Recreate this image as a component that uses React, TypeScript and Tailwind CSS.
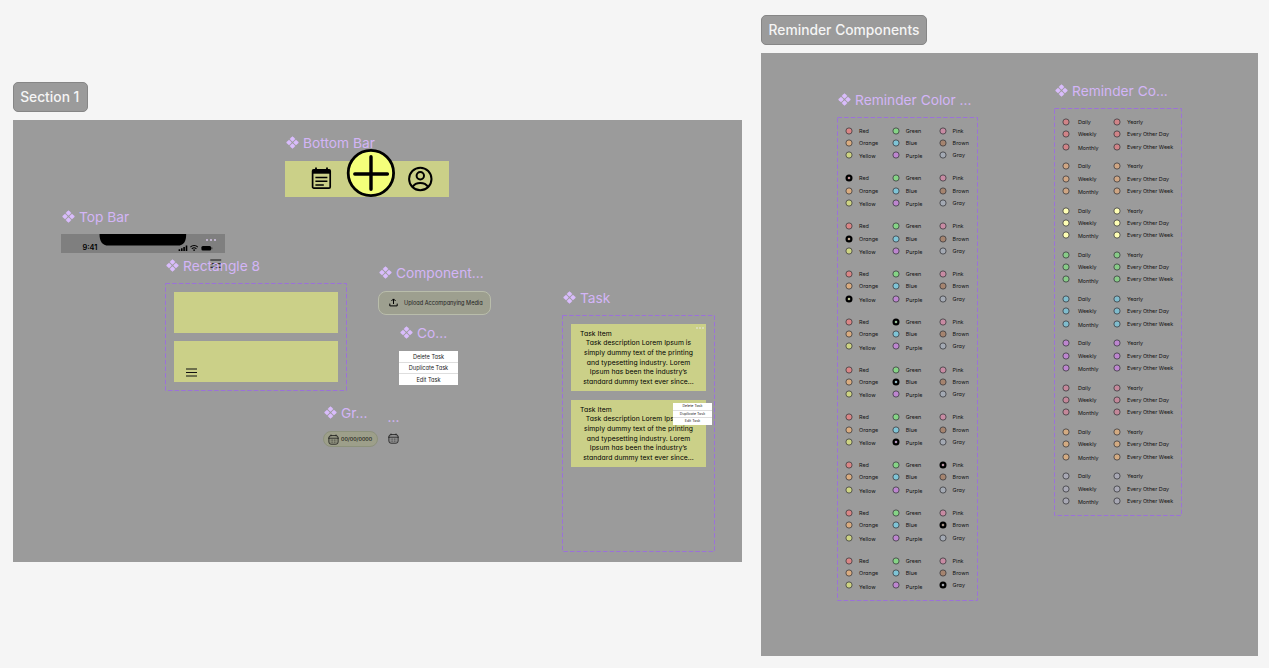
import type { ReactNode } from "react";

const INTER = "font-[Inter,sans-serif]";
const BODY = "font-[Inter,sans-serif] [font-feature-settings:'cv11']";

function Heading({ children, icon = true }: { children: string; icon?: boolean }) {
  return (
    <div className={`flex h-5 items-center gap-[4.5px] whitespace-nowrap pl-[0.5px] pt-[3px] ${INTER} text-[13.75px] text-[#d3b5f7]`}>
      {icon && (
        <svg viewBox="0 0 13 13" className="-mt-[2px] size-[13px] shrink-0" fill="#d9bcfc">
          {[[6.5, 3], [3, 6.5], [10, 6.5], [6.5, 10]].map(([x, y]) => (
            <rect key={`${x}-${y}`} x={x - 1.9} y={y - 1.9} width="3.8" height="3.8" rx="0.9" transform={`rotate(45 ${x} ${y})`} stroke="#d9bcfc" strokeWidth="0.5" />
          ))}
        </svg>
      )}
      <span>{children}</span>
    </div>
  );
}

/* A titled item on the free canvas; the title sits above the content. */
function Node({ title, icon, className, children }: { title: string; icon?: boolean; className: string; children: ReactNode }) {
  return (
    <div className={`absolute flex flex-col items-start ${className}`}>
      <Heading icon={icon}>{title}</Heading>
      {children}
    </div>
  );
}

function Section({ title, tagWidth, className, children }: { title: string; tagWidth: string; className: string; children: ReactNode }) {
  return (
    <div className="flex flex-col items-start gap-2">
      <div className={`flex h-[30px] items-center justify-center rounded-[5px] border border-[#868686] bg-[#9b9b9b] ${INTER} whitespace-nowrap text-[13.8px] font-medium text-[#f5f5f5] ${tagWidth}`}>
        {title}
      </div>
      <section className={`relative bg-[#9b9b9b] ${className}`}>{children}</section>
    </div>
  );
}

function Frame({ className, children }: { className: string; children: ReactNode }) {
  return (
    <div className={`relative ${className}`}>
      <svg className="absolute inset-0 size-full overflow-visible" fill="none">
        <rect x="0.5" y="0.5" width="100%" height="100%" stroke="#9b72d8" strokeWidth="1" strokeDasharray="4.6 2" className="[height:calc(100%-1px)] [width:calc(100%-1px)]" />
      </svg>
      {children}
    </div>
  );
}

function Dot({ color, selected = false }: { color: string; selected?: boolean }) {
  return (
    <svg viewBox="0 0 8 8" className="size-2 shrink-0">
      {selected ? (
        <>
          <circle cx="4" cy="4" r="3.5" fill="#000" />
          <circle cx="4" cy="4" r="1.05" fill={color} stroke="#fff" strokeWidth="0.3" />
        </>
      ) : (
        <circle cx="4" cy="4" r="3.1" fill={color} stroke="#35353a" strokeWidth="0.75" />
      )}
    </svg>
  );
}

type Option = { name: string; color: string; low?: boolean };

function OptionColumn({ options, selected, className }: { options: Option[]; selected?: string; className: string }) {
  return (
    <div className="flex shrink-0 flex-col gap-[4.3px]">
      {options.map((o) => (
        <div key={o.name} className={`flex h-2 items-center ${className}`}>
          <Dot color={o.color} selected={o.name === selected} />
          <span className={`whitespace-nowrap ${BODY} text-[5.4px] leading-2 tracking-[0.02px] text-[#111] ${o.low ? "pt-[2.4px]" : ""}`}>{o.name}</span>
        </div>
      ))}
    </div>
  );
}

const COLORS: Option[][] = [
  [{ name: "Red", color: "#d98686" }, { name: "Orange", color: "#d9ac80" }, { name: "Yellow", color: "#cdd383", low: true }],
  [{ name: "Green", color: "#86d486" }, { name: "Blue", color: "#7fc4d6" }, { name: "Purple", color: "#bd86cf", low: true }],
  [{ name: "Pink", color: "#c78ba3" }, { name: "Brown", color: "#a5846f" }, { name: "Gray", color: "#a3a9b3" }],
];
const PICKS = ["", "Red", "Orange", "Yellow", "Green", "Blue", "Purple", "Pink", "Brown", "Gray"];
const REPEAT = ["#d08488", "#cfa684", "#ffffb5", "#88cb88", "#80bccd", "#bd86cf", "#c4889a", "#d3ab82", "#a8a8b4"];

function Menu({ small = false }: { small?: boolean }) {
  return (
    <div className={`flex flex-col overflow-hidden bg-white text-center ${BODY} text-[#222] ${small ? "h-[22px] w-[39px] text-[3.6px]" : "h-[34px] w-[59px] text-[5.6px]"}`}>
      {["Delete Task", "Duplicate Task", "Edit Task"].map((t, i) => (
        <div key={t} className={`flex min-h-0 flex-1 items-center justify-center whitespace-nowrap leading-none ${small ? "pt-px" : "pt-[2.4px]"} ${i ? "border-t border-[#dedede]" : ""}`}>
          {t}
        </div>
      ))}
    </div>
  );
}

const LINES = ["Task description Lorem Ipsum is", "simply dummy text of the printing", "and typesetting industry. Lorem", "Ipsum has been the industry’s", "standard dummy text ever since..."];

function TaskCard({ menu = false }: { menu?: boolean }) {
  return (
    <div className={`relative h-[67px] w-[135px] bg-[#cbd088] pt-[5.4px] ${BODY} text-black`}>
      <div className="pl-[9px] text-[6.8px] leading-[9px] tracking-[0.06px]">Task Item</div>
      <div className="flex flex-col items-center text-[6.8px] tracking-[0.04px]">
        {LINES.map((l) => (
          <div key={l} className="h-[9.65px] whitespace-nowrap leading-[9.65px]">{l}</div>
        ))}
      </div>
      {menu ? (
        <div className="absolute -right-[6px] top-[3px]"><Menu small /></div>
      ) : (
        <div className="absolute right-[2px] top-[3px] flex gap-[1px]">
          {[0, 1, 2].map((i) => <i key={i} className="size-[2px] rounded-full bg-[#dedfc5]" />)}
        </div>
      )}
    </div>
  );
}

function Calendar() {
  return (
    <svg viewBox="0 0 11 11" className="size-[11px] shrink-0" fill="none" stroke="#111" strokeWidth="0.8">
      <rect x="0.9" y="1.6" width="9.2" height="8.6" rx="2.2" />
      <path d="M0.3 4.2H10.7M3 0.6V2.2M8 0.6V2.2" />
      <path d="M2.7 6.1H8.5M2.7 8.1H8.5" strokeDasharray="0.9 0.7" />
    </svg>
  );
}

function BottomBar() {
  return (
    <div className="mt-[9px] flex h-9 w-[164px] items-center gap-[13px] bg-[#cbd088] pl-[25px]">
      <svg className="h-6 w-[23px] shrink-0" viewBox="0 0 23 24" fill="none" stroke="#000" strokeWidth="1.7">
        <rect x="2.6" y="2.9" width="17.6" height="18.2" rx="1.2" />
        <path d="M2.6 4.7H20.2" strokeWidth="4" />
        <path d="M6 0.5V4M17 0.5V4" strokeWidth="1.8" />
        <path d="M5.4 10.5H17.4M5.4 14.3H17.4M5.4 17.9H13.8" strokeWidth="1.5" />
      </svg>
      <svg className="-mb-3 -mt-6 size-[50px] shrink-0" viewBox="0 0 50 50" stroke="#000" strokeLinecap="round">
        <circle cx="24.9" cy="25" r="22.7" fill="#f4ff7a" strokeWidth="2.8" />
        <path d="M25 8.8V41.2M8.8 26H41.4" strokeWidth="3.4" />
      </svg>
      <svg className="-ml-[2px] size-[26px] shrink-0" viewBox="0 0 26 26" fill="none" stroke="#000" strokeWidth="2">
        <circle cx="13.3" cy="13" r="11.2" />
        <circle cx="13.3" cy="9.8" r="3.7" />
        <path d="M5.6 20.8C8.8 15.6 17.8 15.6 21 20.8" />
      </svg>
    </div>
  );
}

function StatusBar() {
  return (
    <div className="relative mt-[8px] flex h-[19px] w-[164px] items-end bg-[#7f7f7f] pl-[21.5px]">
      <span className={`w-[95.5px] ${INTER} text-[7.4px] font-semibold leading-[10px] text-black`}>9:41</span>
      <svg className="mb-[1px] h-2 w-9" viewBox="0 0 36 8" fill="#000">
        <path d="M0.6 5.2H2.2V7H0.6ZM3 4.2H4.6V7H3ZM5.3 3H6.9V7H5.3ZM7.7 1.6H9.3V7H7.7Z" />
        <path d="M12.4 3.2C14.5 1 17.7 1 19.8 3.2M13.8 4.8C15.2 3.5 17 3.5 18.4 4.8" fill="none" stroke="#000" strokeWidth="1.1" />
        <circle cx="16.1" cy="6.1" r="0.9" />
        <rect x="23.4" y="2" width="9.8" height="4.6" rx="1.5" />
        <rect x="33.7" y="3.4" width="0.5" height="1.8" />
      </svg>
      <svg className="absolute left-[38px] top-0 h-3 w-[88px]" viewBox="0 0 88 12">
        <path d="M0.5 0H87.2C87.2 7 85 11.6 78.5 11.6H9.5C3 11.6 0.5 7 0.5 0Z" />
      </svg>
      <div className="absolute right-[9px] top-[5px] flex gap-[2px]">
        {[0, 1, 2].map((i) => <i key={i} className="size-[2px] rounded-full bg-[#d4c4e6]" />)}
      </div>
      <svg className="absolute right-[3px] top-[24px] h-[11px] w-3" viewBox="0 0 12 11" stroke="#111" strokeWidth="1.1">
        <path d="M0.3 2H11.2M0.3 5.7H11.2M0.3 9.2H11.2" />
      </svg>
    </div>
  );
}

export default function App() {
  return (
    <main className="flex h-[668px] w-[1269px] items-start gap-[19px] overflow-hidden bg-[#f5f5f5] pl-[13px]">
      <div className="pt-[82px]">
        <Section title="Section 1" tagWidth="w-[75px] pr-[1.5px]" className="h-[442px] w-[729px]">
          <Node title="Bottom Bar" className="left-[272px] top-[12px]">
            <BottomBar />
          </Node>
          <Node title="Top Bar" className="left-[48px] top-[85.5px]">
            <StatusBar />
          </Node>
          <Node title="Rectangle 8" className="left-[152px] top-[135px]">
            <Frame className="mt-[8px] flex h-[108px] w-[182px] flex-col gap-[8.4px] pl-[8.5px] pt-[9px]">
              <div className="h-[41px] w-[164px] bg-[#cbd088]" />
              <div className="flex h-[41px] w-[164px] items-end bg-[#cbd088] pb-[5px] pl-[12px]">
                <svg className="h-[9px] w-[11px]" viewBox="0 0 11 9" stroke="#111" strokeWidth="1.1">
                  <path d="M0 1H11M0 4.5H11M0 8H11" />
                </svg>
              </div>
            </Frame>
          </Node>
          <Node title="Component..." className="left-[365px] top-[142px]">
            <div className="mt-[9px] flex h-6 w-[113px] items-center rounded-[8px] border border-[#b9bdab] bg-[#9d9f8f] pl-[10px]">
              <svg className="mr-[6px] size-[9px] -translate-y-px" viewBox="0 0 9 9" fill="none" stroke="#000" strokeWidth="1">
                <path d="M4.5 6V1M2.4 3L4.5 0.9L6.6 3M0.8 5.6V7.9H8.2V5.6" />
              </svg>
              <span className={`whitespace-nowrap ${BODY} pt-px text-[5.6px] text-[#1c1c1c]`}>Upload Accompanying Media</span>
            </div>
          </Node>
          <Node title="Co..." className="left-[386px] top-[202px]">
            <div className="mt-[9px]"><Menu /></div>
          </Node>
          <Node title="Gr..." className="left-[310px] top-[282px]">
            <div className={`mt-[9px] flex h-4 w-[55px] items-center gap-[2px] rounded-full border border-[#8d927c] bg-[#9d9f8a] pl-1 ${BODY} text-[5.4px] text-black`}>
              <Calendar />
              <span>00/00/0000</span>
            </div>
          </Node>
          <Node title="..." icon={false} className="left-[374px] top-[286px]">
            <div className="ml-px mt-[7px]"><Calendar /></div>
          </Node>
          <Node title="Task" className="left-[549px] top-[167px]">
            <Frame className="mt-[8px] flex h-[237px] w-[153px] flex-col gap-[9px] pl-[9px] pt-[9px]">
              <TaskCard />
              <TaskCard menu />
            </Frame>
          </Node>
        </Section>
      </div>
      <div className="pt-[15px]">
        <Section title="Reminder Components" tagWidth="w-[166px]" className="h-[603px] w-[497px]">
          <Node title="Reminder Color ..." className="left-[76px] top-[36px]">
            <Frame className="mt-[8px] flex h-[484px] w-[141px] flex-col gap-[15.2px] pl-[8px] pt-[9.7px]">
              {PICKS.map((pick) => (
                <div key={pick} className="flex h-[32.6px] shrink-0">
                  {COLORS.map((column, i) => (
                    <OptionColumn key={i} options={column} selected={pick} className="w-[46.8px] gap-[6px]" />
                  ))}
                </div>
              ))}
            </Frame>
          </Node>
          <Node title="Reminder Co..." className="left-[293px] top-[27px]">
            <Frame className="mt-[8px] flex h-[408px] w-[128px] flex-col gap-[11.7px] pl-[8.4px] pt-[10px]">
              {REPEAT.map((color) => (
                <div key={color} className="flex h-[32.6px] shrink-0">
                  <OptionColumn options={[{ name: "Daily", color }, { name: "Weekly", color }, { name: "Monthly", color, low: true }]} className="w-[51px] gap-[7.5px]" />
                  <OptionColumn options={[{ name: "Yearly", color }, { name: "Every Other Day", color }, { name: "Every Other Week", color }]} className="w-[60px] gap-[5.5px]" />
                </div>
              ))}
            </Frame>
          </Node>
        </Section>
      </div>
    </main>
  );
}
